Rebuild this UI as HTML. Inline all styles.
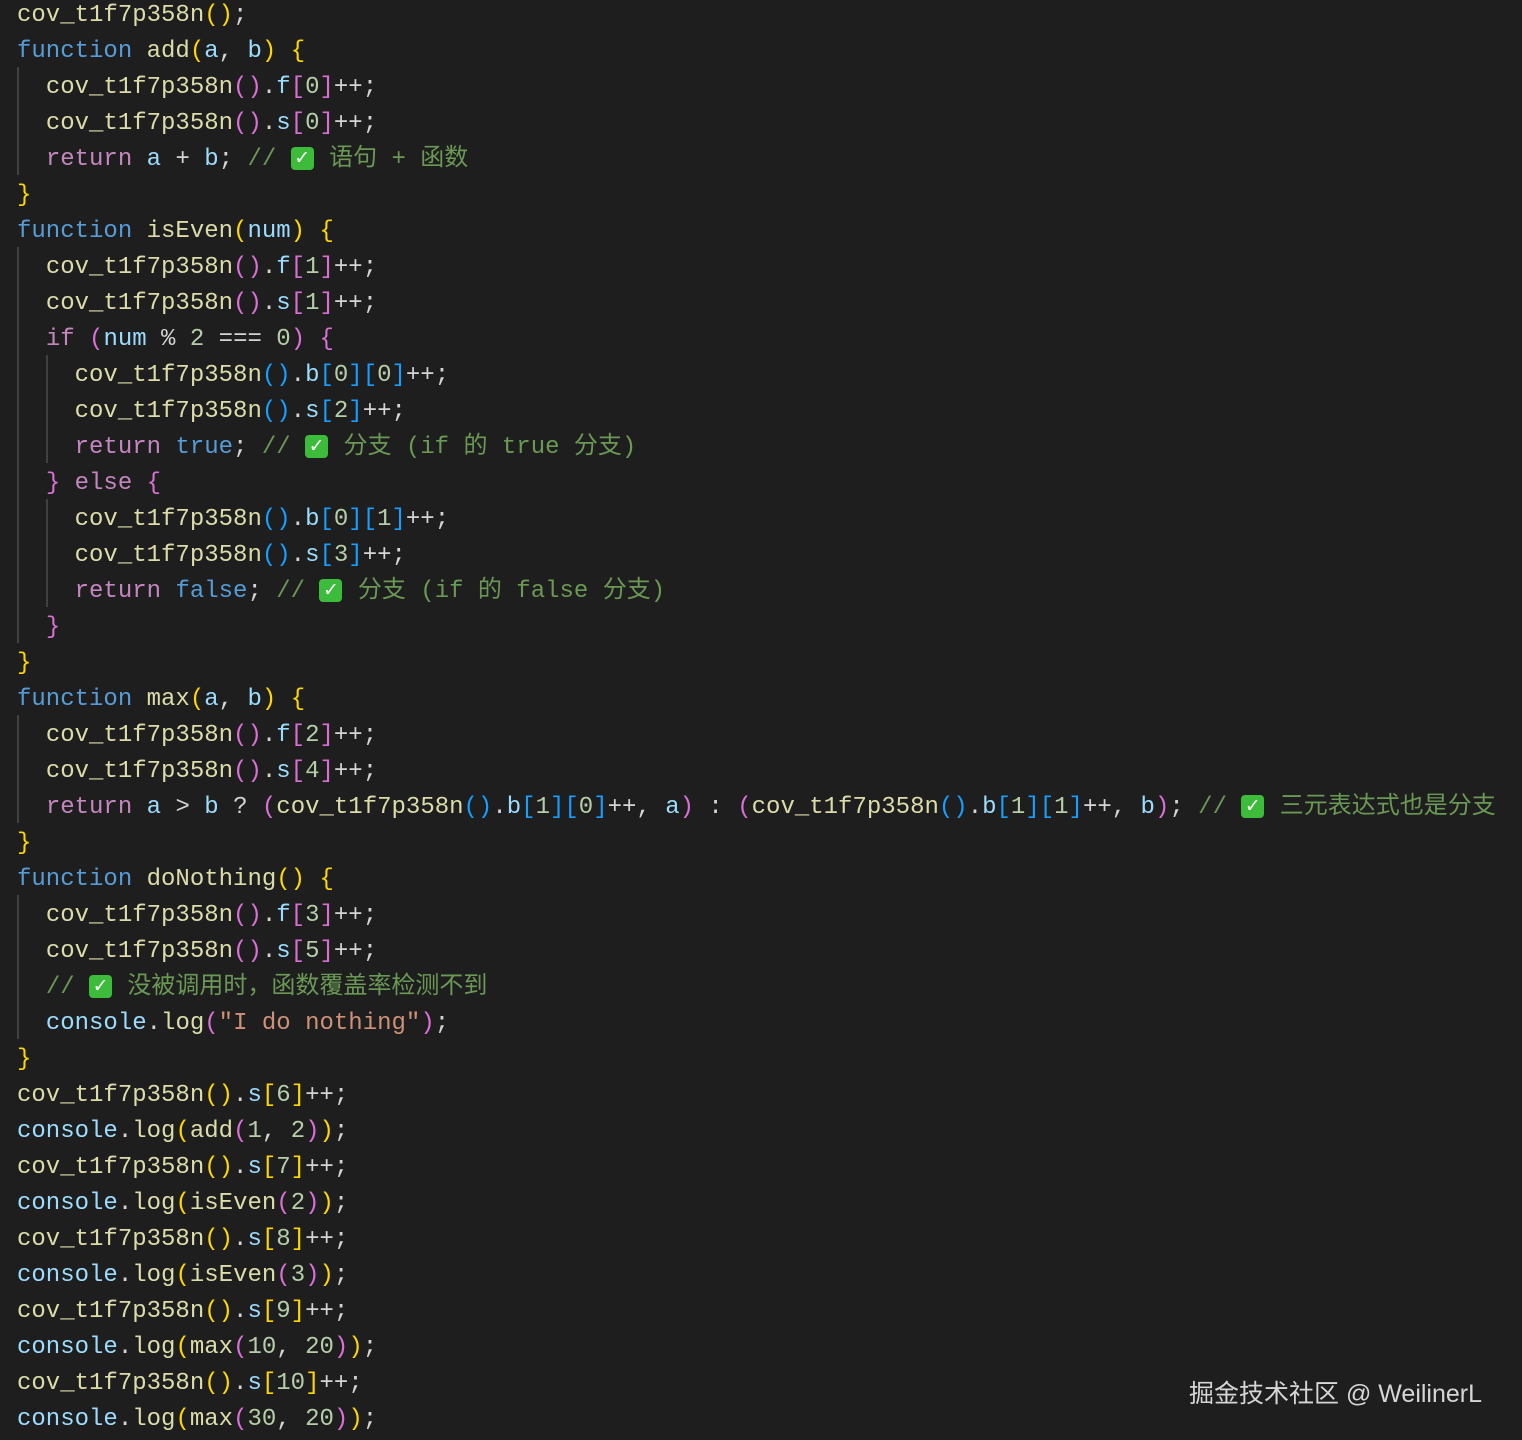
<!DOCTYPE html>
<html><head><meta charset="utf-8"><style>
html,body{margin:0;padding:0;background:#1e1e1e;width:1522px;height:1440px;overflow:hidden}
pre{position:absolute;left:17px;top:-2px;margin:0;font-family:"Liberation Mono","Noto Sans CJK SC",monospace;font-size:24px;line-height:36px;color:#d4d4d4;white-space:pre}
.f{color:#dcdcaa}.k{color:#569cd6}.c{color:#c586c0}.v{color:#9cdcfe}.n{color:#b5cea8}.m{color:#6a9955}.s{color:#ce9178}
.a{color:#ffd700}.b{color:#da70d6}.d{color:#179fff}
.ck{display:inline-block;width:23px;height:23px;background:#3dbb3a;border-radius:4px;color:#fff;font-size:19px;line-height:23px;text-align:center;vertical-align:1px;margin:0 1px 0 0;font-family:"DejaVu Sans",sans-serif;font-weight:bold}
.g{position:absolute;width:2px;background:#404040}
.wm{position:absolute;left:1189px;top:1374px;font-family:"Liberation Sans","Noto Sans CJK SC",sans-serif;font-size:25px;color:#d6d6d6}
</style></head><body>
<div class="g" style="left:17px;top:67px;height:108px"></div>
<div class="g" style="left:17px;top:247px;height:396px"></div>
<div class="g" style="left:17px;top:715px;height:108px"></div>
<div class="g" style="left:17px;top:895px;height:144px"></div>
<div class="g" style="left:46px;top:355px;height:108px"></div>
<div class="g" style="left:46px;top:499px;height:108px"></div>
<pre><span class="f">cov_t1f7p358n</span><span class="a">()</span>;
<span class="k">function</span> <span class="f">add</span><span class="a">(</span><span class="v">a</span>, <span class="v">b</span><span class="a">)</span> <span class="a">{</span>
  <span class="f">cov_t1f7p358n</span><span class="b">()</span>.<span class="v">f</span><span class="b">[</span><span class="n">0</span><span class="b">]</span>++;
  <span class="f">cov_t1f7p358n</span><span class="b">()</span>.<span class="v">s</span><span class="b">[</span><span class="n">0</span><span class="b">]</span>++;
  <span class="c">return</span> <span class="v">a</span> + <span class="v">b</span>; <span class="m">// <span class="ck">✓</span> 语句 + 函数</span>
<span class="a">}</span>
<span class="k">function</span> <span class="f">isEven</span><span class="a">(</span><span class="v">num</span><span class="a">)</span> <span class="a">{</span>
  <span class="f">cov_t1f7p358n</span><span class="b">()</span>.<span class="v">f</span><span class="b">[</span><span class="n">1</span><span class="b">]</span>++;
  <span class="f">cov_t1f7p358n</span><span class="b">()</span>.<span class="v">s</span><span class="b">[</span><span class="n">1</span><span class="b">]</span>++;
  <span class="c">if</span> <span class="b">(</span><span class="v">num</span> % <span class="n">2</span> === <span class="n">0</span><span class="b">)</span> <span class="b">{</span>
    <span class="f">cov_t1f7p358n</span><span class="d">()</span>.<span class="v">b</span><span class="d">[</span><span class="n">0</span><span class="d">]</span><span class="d">[</span><span class="n">0</span><span class="d">]</span>++;
    <span class="f">cov_t1f7p358n</span><span class="d">()</span>.<span class="v">s</span><span class="d">[</span><span class="n">2</span><span class="d">]</span>++;
    <span class="c">return</span> <span class="k">true</span>; <span class="m">// <span class="ck">✓</span> 分支 (if 的 true 分支)</span>
  <span class="b">}</span> <span class="c">else</span> <span class="b">{</span>
    <span class="f">cov_t1f7p358n</span><span class="d">()</span>.<span class="v">b</span><span class="d">[</span><span class="n">0</span><span class="d">]</span><span class="d">[</span><span class="n">1</span><span class="d">]</span>++;
    <span class="f">cov_t1f7p358n</span><span class="d">()</span>.<span class="v">s</span><span class="d">[</span><span class="n">3</span><span class="d">]</span>++;
    <span class="c">return</span> <span class="k">false</span>; <span class="m">// <span class="ck">✓</span> 分支 (if 的 false 分支)</span>
  <span class="b">}</span>
<span class="a">}</span>
<span class="k">function</span> <span class="f">max</span><span class="a">(</span><span class="v">a</span>, <span class="v">b</span><span class="a">)</span> <span class="a">{</span>
  <span class="f">cov_t1f7p358n</span><span class="b">()</span>.<span class="v">f</span><span class="b">[</span><span class="n">2</span><span class="b">]</span>++;
  <span class="f">cov_t1f7p358n</span><span class="b">()</span>.<span class="v">s</span><span class="b">[</span><span class="n">4</span><span class="b">]</span>++;
  <span class="c">return</span> <span class="v">a</span> &gt; <span class="v">b</span> ? <span class="b">(</span><span class="f">cov_t1f7p358n</span><span class="d">()</span>.<span class="v">b</span><span class="d">[</span><span class="n">1</span><span class="d">]</span><span class="d">[</span><span class="n">0</span><span class="d">]</span>++, <span class="v">a</span><span class="b">)</span> : <span class="b">(</span><span class="f">cov_t1f7p358n</span><span class="d">()</span>.<span class="v">b</span><span class="d">[</span><span class="n">1</span><span class="d">]</span><span class="d">[</span><span class="n">1</span><span class="d">]</span>++, <span class="v">b</span><span class="b">)</span>; <span class="m">// <span class="ck">✓</span> 三元表达式也是分支</span>
<span class="a">}</span>
<span class="k">function</span> <span class="f">doNothing</span><span class="a">()</span> <span class="a">{</span>
  <span class="f">cov_t1f7p358n</span><span class="b">()</span>.<span class="v">f</span><span class="b">[</span><span class="n">3</span><span class="b">]</span>++;
  <span class="f">cov_t1f7p358n</span><span class="b">()</span>.<span class="v">s</span><span class="b">[</span><span class="n">5</span><span class="b">]</span>++;
  <span class="m">// <span class="ck">✓</span> 没被调用时，函数覆盖率检测不到</span>
  <span class="v">console</span>.<span class="f">log</span><span class="b">(</span><span class="s">"I do nothing"</span><span class="b">)</span>;
<span class="a">}</span>
<span class="f">cov_t1f7p358n</span><span class="a">()</span>.<span class="v">s</span><span class="a">[</span><span class="n">6</span><span class="a">]</span>++;
<span class="v">console</span>.<span class="f">log</span><span class="a">(</span><span class="f">add</span><span class="b">(</span><span class="n">1</span>, <span class="n">2</span><span class="b">)</span><span class="a">)</span>;
<span class="f">cov_t1f7p358n</span><span class="a">()</span>.<span class="v">s</span><span class="a">[</span><span class="n">7</span><span class="a">]</span>++;
<span class="v">console</span>.<span class="f">log</span><span class="a">(</span><span class="f">isEven</span><span class="b">(</span><span class="n">2</span><span class="b">)</span><span class="a">)</span>;
<span class="f">cov_t1f7p358n</span><span class="a">()</span>.<span class="v">s</span><span class="a">[</span><span class="n">8</span><span class="a">]</span>++;
<span class="v">console</span>.<span class="f">log</span><span class="a">(</span><span class="f">isEven</span><span class="b">(</span><span class="n">3</span><span class="b">)</span><span class="a">)</span>;
<span class="f">cov_t1f7p358n</span><span class="a">()</span>.<span class="v">s</span><span class="a">[</span><span class="n">9</span><span class="a">]</span>++;
<span class="v">console</span>.<span class="f">log</span><span class="a">(</span><span class="f">max</span><span class="b">(</span><span class="n">10</span>, <span class="n">20</span><span class="b">)</span><span class="a">)</span>;
<span class="f">cov_t1f7p358n</span><span class="a">()</span>.<span class="v">s</span><span class="a">[</span><span class="n">10</span><span class="a">]</span>++;
<span class="v">console</span>.<span class="f">log</span><span class="a">(</span><span class="f">max</span><span class="b">(</span><span class="n">30</span>, <span class="n">20</span><span class="b">)</span><span class="a">)</span>;</pre>
<div class="wm">掘金技术社区 @ WeilinerL</div>
</body></html>
